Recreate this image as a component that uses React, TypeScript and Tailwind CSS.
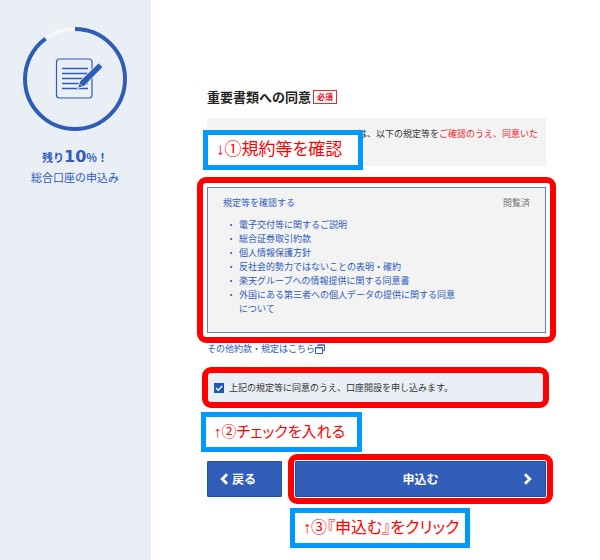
import type { ReactNode } from 'react';

const documents = [
  '電子交付等に関するご説明',
  '総合証券取引約款',
  '個人情報保護方針',
  '反社会的勢力ではないことの表明・確約',
  '楽天グループへの情報提供に関する同意書',
  '外国にある第三者への個人データの提供に関する同意について',
];

const Note = ({ className, children }: { className: string; children: ReactNode }) => (
  <p
    className={`absolute z-10 flex h-10 items-center whitespace-nowrap border-[5px] border-[#0099ff] bg-white pl-2 font-['Liberation_Sans','Noto_Sans_CJK_JP',sans-serif] font-normal text-[#ff0000] [font-feature-settings:'palt'] ${className}`}
  >
    {children}
  </p>
);

const Progress = () => (
  <svg viewBox="0 0 104 104" className="h-[104px] w-[104px]" fill="none" aria-hidden="true">
    <circle cx="52" cy="52" r="50" stroke="#f7f7f5" strokeWidth="4" />
    <circle
      cx="52"
      cy="52"
      r="50"
      stroke="#2e5cb8"
      strokeWidth="4"
      pathLength="100"
      strokeDasharray="90 10"
      transform="rotate(-90 52 52)"
    />
    <rect x="33.5" y="32" width="35.5" height="39" rx="3" stroke="#2e5cb8" strokeWidth="1.2" />
    <path d="M39 41.5h26M39 46.5h26M39 51.5h26M39 56.5h26M39 61.5h26" stroke="#2e5cb8" strokeWidth="1.5" />
    <path
      d="M54.5 61.5l2.5-7.5L75 36.500q.7-.6 1.400.1l2.800 3q.6.7-.1 1.400L61.500 59z"
      fill="#2e5cb8"
      stroke="#eaeff6"
      strokeWidth="1"
    />
    <path d="M57.3 57.3l1.800 1.800" stroke="#eaeff6" strokeWidth=".7" />
  </svg>
);

const App = () => {
  return (
    <div className="flex min-h-screen bg-white font-['Noto_Sans_CJK_JP',sans-serif] text-[9px] leading-[14px] text-[#333333]">
      {/* Sidebar */}
      <aside className="flex w-[151px] shrink-0 flex-col items-center bg-[#eaeff6] pr-px pt-[27px] text-[#2e5cb8]">
        <Progress />
        <p className="mt-4 text-[11px] font-bold leading-5">
          残り<span className="font-['DejaVu_Sans',sans-serif] text-base leading-5">10</span>%！
        </p>
        <p className="text-[11px] leading-5">総合口座の申込み</p>
      </aside>

      {/* Agreement form */}
      <main className="min-w-0 flex-1 pl-14 pr-[54px] pt-[87px]">
        <div className="flex h-5 items-center gap-0.5">
          <h1 className="text-[13px] font-bold text-[#222222]">重要書類への同意</h1>
          <span className="border border-[#ff2222] px-[3px] text-[8px] font-bold leading-3 text-[#e60012]">必須</span>
        </div>

        <div className="relative mt-[11px] h-12 bg-[#f3f3f3] py-[9px] pr-2">
          <p className="text-right">
            は、以下の規定等を<span className="text-[#e8262d]">ご確認のうえ、同意いた</span>
          </p>
          <Note className="-left-1 top-3 w-40 text-[17px]">↓①規約等を確認</Note>
        </div>

        <section className="relative mt-[21px] border border-[#5b82c8] bg-[#f3f3f3] px-[15px] pb-4 pt-2 text-[#2e5cb8]">
          <div className="flex justify-between">
            <a href="#documents">規定等を確認する</a>
            <span className="text-[#777777]">閲覧済</span>
          </div>
          <ul id="documents" className="mt-2 w-60 list-none">
            {documents.map((name) => (
              <li key={name} className="flex">
                <span className="w-4 shrink-0 text-center">・</span>
                <a href="#documents">{name}</a>
              </li>
            ))}
          </ul>
          <div className="pointer-events-none absolute -inset-[11px] rounded-[9px] border-[6px] border-[#ff0000]" />
        </section>

        <a href="#terms" className="mt-[9px] flex items-center text-[#2e5cb8]">
          その他約款・規定はこちら
          <svg viewBox="0 0 10 10" className="h-[10px] w-[10px]" fill="none" stroke="#2e5cb8" aria-hidden="true">
            <path d="M3 2.5V1h6.5v5.5H8M2.5 1h7" />
            <path d="M.5 3.5h7v6h-7zM.5 4h7" />
          </svg>
        </a>

        <label className="relative mr-0.5 mt-4 flex h-[31px] items-center gap-[5px] bg-[#eaeff6] pl-[7px]">
          <input type="checkbox" defaultChecked className="h-[10px] w-[10px] appearance-none bg-[#2456b3]" />
          <svg viewBox="0 0 10 10" className="pointer-events-none absolute left-[7px] h-[10px] w-[10px]" fill="none" aria-hidden="true">
            <path d="M2 5l2.2 2.2L8.2 3" stroke="white" strokeWidth="1.4" />
          </svg>
          上記の規定等に同意のうえ、口座開設を申し込みます。
          <span className="pointer-events-none absolute -inset-[5px] rounded-[9px] border-[6px] border-[#ff0000]" />
        </label>

        <div className="relative mt-[58px] flex gap-[13px] text-xs font-bold text-white">
          <Note className="-left-1.5 -top-[49px] w-[161px] text-[15px]">↑②チェックを入れる</Note>
          <button type="button" className="flex h-9 w-[75px] items-center rounded-[1px] border border-[#2350a8] bg-[#315eb9] pl-3">
            <svg viewBox="0 0 8 12" className="mr-1 h-3 w-2" fill="none" aria-hidden="true">
              <path d="M7 1.2L2.2 6 7 10.8" stroke="white" strokeWidth="2.8" />
            </svg>
            戻る
          </button>
          <div className="relative flex-1">
            <button type="submit" className="relative h-9 w-full rounded-[1px] border border-[#2350a8] bg-[#315eb9]">
              申込む
              <svg viewBox="0 0 8 12" className="absolute right-[13px] top-[11px] h-3 w-2" fill="none" aria-hidden="true">
                <path d="M1 1.2L5.8 6 1 10.8" stroke="white" strokeWidth="2.8" />
              </svg>
            </button>
            <div className="pointer-events-none absolute -inset-[7px] rounded-[9px] border-[6px] border-[#ff0000]" />
            <Note className="-left-[5px] top-[47px] w-[180px] text-base">↑③『申込む』をクリック</Note>
          </div>
        </div>
      </main>
    </div>
  );
};

export default App;
